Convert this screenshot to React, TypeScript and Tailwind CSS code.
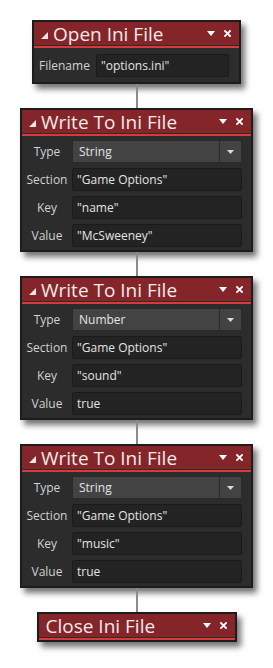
import React from "react";

interface Field {
  label: string;
  value: string;
  select?: boolean;
}

interface Block {
  title: string;
  width: string;
  labelW: string;
  fields: Field[];
  collapse?: boolean;
}

const BLOCKS: Block[] = [
  {
    title: "Open Ini File",
    width: "w-[209px]",
    labelW: "w-[62px]",
    collapse: true,
    fields: [{ label: "Filename", value: '"options.ini"' }],
  },
  {
    title: "Write To Ini File",
    width: "w-[233px]",
    labelW: "w-[50px]",
    collapse: true,
    fields: [
      { label: "Type", value: "String", select: true },
      { label: "Section", value: '"Game Options"' },
      { label: "Key", value: '"name"' },
      { label: "Value", value: '"McSweeney"' },
    ],
  },
  {
    title: "Write To Ini File",
    width: "w-[233px]",
    labelW: "w-[50px]",
    collapse: true,
    fields: [
      { label: "Type", value: "Number", select: true },
      { label: "Section", value: '"Game Options"' },
      { label: "Key", value: '"sound"' },
      { label: "Value", value: "true" },
    ],
  },
  {
    title: "Write To Ini File",
    width: "w-[233px]",
    labelW: "w-[50px]",
    collapse: true,
    fields: [
      { label: "Type", value: "String", select: true },
      { label: "Section", value: '"Game Options"' },
      { label: "Key", value: '"music"' },
      { label: "Value", value: "true" },
    ],
  },
  {
    title: "Close Ini File",
    width: "w-[200px]",
    labelW: "w-[50px]",
    fields: [],
  },
];

function Header({ title, collapse }: { title: string; collapse?: boolean }) {
  return (
    <div className="h-[23px] bg-[#842629] flex items-center pl-[7px] pr-[8px]">
      {collapse && (
        <svg width="7" height="7" viewBox="0 0 7 7" className="mr-[5px] mt-[3px] shrink-0">
          <polygon points="7,0 7,7 0,7" fill="#f2e4e4" />
        </svg>
      )}
      <span className="flex-1 text-[19px] leading-none text-[#f3e9e9] whitespace-nowrap pt-[1px]">
        {title}
      </span>
      <svg width="8" height="5" viewBox="0 0 8 5" className="mr-[9px] shrink-0">
        <polygon points="0,0 8,0 4,5" fill="#ffffff" />
      </svg>
      <svg width="7" height="7" viewBox="0 0 7 7" className="shrink-0">
        <path d="M1 1 L6 6 M6 1 L1 6" stroke="#ffffff" strokeWidth="1.8" strokeLinecap="square" />
      </svg>
    </div>
  );
}

function Row({ field, labelW, left }: { field: Field; labelW: string; left?: boolean }) {
  return (
    <div className="flex items-center">
      <div
        className={`${labelW} shrink-0 text-[12px] text-[#d2d2d2] ${left ? "text-left pl-[5px]" : "text-center"}`}
      >
        {field.label}
      </div>
      {field.select ? (
        <div className="flex-1 h-[23px] flex rounded-[2px] border border-[#2a2a2a] bg-[#434343]">
          <div className="flex-1 flex items-center pl-[6px] text-[12px] text-[#e4e4e4]">{field.value}</div>
          <div className="w-[22px] border-l border-[#2a2a2a] flex items-center justify-center">
            <svg width="7" height="4" viewBox="0 0 7 4">
              <polygon points="0,0 7,0 3.5,4" fill="#dcdcdc" />
            </svg>
          </div>
        </div>
      ) : (
        <div className="flex-1 h-[23px] flex items-center pl-[4px] rounded-[2px] border border-[#1b1b1b] bg-[#232323] text-[12px] text-[#e4e4e4]">
          {field.value}
        </div>
      )}
    </div>
  );
}

function BlockCard({ block }: { block: Block }) {
  const single = block.fields.length === 1;
  return (
    <div
      className={`${block.width} border-2 border-[#1c1c1c] bg-[#2c2c2c] shadow-[4px_5px_6px_rgba(0,0,0,0.55)]`}
    >
      <Header title={block.title} collapse={block.collapse} />
      <div className="h-[1px] bg-[#2c2c2c]" />
      <div className="h-[2px] bg-[#d8393b]" />
      {block.fields.length > 0 && (
        <div
          className={`flex flex-col gap-[5px] ${single ? "pt-[6px] pb-[5px] pr-[10px]" : "pt-[4px] pb-[3px] pr-[9px]"}`}
        >
          {block.fields.map((f, i) => (
            <Row key={i} field={f} labelW={block.labelW} left={single} />
          ))}
        </div>
      )}
    </div>
  );
}

export default function App() {
  return (
    <div
      className="w-[273px] h-[668px] bg-white flex flex-col items-center pt-[20px]"
      style={{ fontFamily: '"Open Sans", "Noto Sans", sans-serif' }}
    >
      {BLOCKS.map((b, i) => (
        <React.Fragment key={i}>
          {i > 0 && <div className="w-[2px] h-[24px] bg-[#8c8c8c]" />}
          <BlockCard block={b} />
        </React.Fragment>
      ))}
    </div>
  );
}
